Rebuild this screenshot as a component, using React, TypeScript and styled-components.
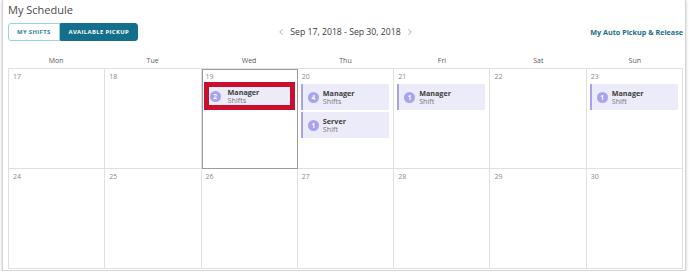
import React from 'react'
import styled, { createGlobalStyle } from 'styled-components'
import { ChevronLeft, ChevronRight } from 'lucide-react'

const GlobalStyle = createGlobalStyle`
  html, body {
    margin: 0;
    padding: 0;
    background: #ffffff;
  }
  body {
    font-family: 'Open Sans', 'Liberation Sans', sans-serif;
    color: #333;
  }
`

const Frame = styled.div`
  margin-left: 2px;
  width: 684px;
  height: 271px;
  box-sizing: border-box;
  border: 1px solid #d4d4d4;
  border-top: none;
  box-shadow: 0 1px 3px rgba(0, 0, 0, 0.22);
  padding: 0 2px 1px 5px;
  display: flex;
  flex-direction: column;
`

const Title = styled.h1`
  margin: 0;
  font-size: 11px;
  line-height: 20px;
  font-weight: 400;
  color: #4a4a4a;
`

const Toolbar = styled.div`
  margin-top: 2px;
  height: 19px;
  display: grid;
  grid-template-columns: 1fr auto 1fr;
  align-items: center;
`

const Toggle = styled.div`
  display: flex;
  height: 18px;
`

const ToggleButton = styled.div<{ $active?: boolean }>`
  box-sizing: border-box;
  height: 18px;
  padding: 0 8px;
  display: flex;
  align-items: center;
  font-size: 5.9px;
  font-weight: 700;
  letter-spacing: 0.35px;
  text-transform: uppercase;
  border: 1px solid ${p => (p.$active ? '#136f8c' : '#93d4e6')};
  background: ${p => (p.$active ? '#136f8c' : '#ffffff')};
  color: ${p => (p.$active ? '#ffffff' : '#2a87a3')};
  border-radius: ${p => (p.$active ? '0 3px 3px 0' : '3px 0 0 3px')};
`

const DateNav = styled.div`
  display: flex;
  align-items: center;
  gap: 4px;
  font-size: 8.7px;
  color: #3a3a3a;
  svg {
    color: #777;
  }
`

const AutoLink = styled.a`
  justify-self: end;
  font-size: 7.2px;
  font-weight: 700;
  color: #1b6c88;
  text-decoration: none;
`

const DayHeader = styled.div`
  margin-top: 9px;
  height: 18px;
  display: grid;
  grid-template-columns: repeat(7, 1fr);
  align-items: center;
`

const DayName = styled.div`
  text-align: center;
  font-size: 7px;
  color: #5a5a5a;
  padding-top: 2px;
`

const Grid = styled.div`
  flex: 1;
  display: grid;
  grid-template-columns: repeat(7, 1fr);
  grid-template-rows: 100px 100px;
  border-top: 1px solid #e0e0e0;
  border-left: 1px solid #e0e0e0;
`

const Cell = styled.div<{ $today?: boolean }>`
  box-sizing: border-box;
  border-right: 1px solid #e0e0e0;
  border-bottom: 1px solid #e0e0e0;
  padding: 2px 4px 0 3px;
  display: flex;
  flex-direction: column;
  gap: 2px;
  outline: ${p => (p.$today ? '1px solid #9c9c9c' : 'none')};
  outline-offset: -1px;
  min-width: 0;
`

const DayNum = styled.div`
  font-size: 7px;
  line-height: 11px;
  color: #8a8a8a;
  padding-left: 1px;
`

const ShiftCard = styled.div`
  height: 26px;
  box-sizing: border-box;
  background: #ecebfa;
  border-left: 2px solid #a7a1ee;
  display: flex;
  align-items: center;
  gap: 4px;
  padding-left: 5px;
`

const Highlight = styled.div`
  margin: -2px -2px 0 -1px;
  border: 5px solid #c8102e;
  height: 28px;
  box-sizing: border-box;
  display: flex;
  align-items: center;
  background: #ffffff;
`

const HighlightCard = styled.div`
  flex: 1;
  height: 18px;
  background: #ecebfa;
  display: flex;
  align-items: center;
  gap: 7px;
  padding-left: 1px;
`

const Badge = styled.div`
  width: 11px;
  height: 11px;
  border-radius: 50%;
  background: #a9a3ef;
  color: #ffffff;
  font-size: 6.5px;
  font-weight: 700;
  display: flex;
  align-items: center;
  justify-content: center;
  flex-shrink: 0;
`

const ShiftText = styled.div`
  display: flex;
  flex-direction: column;
  font-size: 7.2px;
  line-height: 8.5px;
`

const Role = styled.span`
  font-weight: 700;
  color: #3c3c3c;
`

const Count = styled.span`
  color: #7a7a7a;
`

type Shift = { role: string; count: number }

const days = ['Mon', 'Tue', 'Wed', 'Thu', 'Fri', 'Sat', 'Sun']

const shifts: Record<number, Shift[]> = {
  19: [{ role: 'Manager', count: 2 }],
  20: [
    { role: 'Manager', count: 4 },
    { role: 'Server', count: 1 },
  ],
  21: [{ role: 'Manager', count: 1 }],
  23: [{ role: 'Manager', count: 1 }],
}

const ShiftBody = ({ s }: { s: Shift }) => (
  <>
    <Badge>{s.count}</Badge>
    <ShiftText>
      <Role>{s.role}</Role>
      <Count>{s.count > 1 ? 'Shifts' : 'Shift'}</Count>
    </ShiftText>
  </>
)

const App: React.FC = () => {
  const dates = Array.from({ length: 14 }, (_, i) => 17 + i)
  return (
    <>
      <GlobalStyle />
      <Frame>
        <Title>My Schedule</Title>
        <Toolbar>
          <Toggle>
            <ToggleButton>My Shifts</ToggleButton>
            <ToggleButton $active>Available Pickup</ToggleButton>
          </Toggle>
          <DateNav>
            <ChevronLeft size={10} strokeWidth={1.5} />
            <span>Sep 17, 2018 - Sep 30, 2018</span>
            <ChevronRight size={10} strokeWidth={1.5} />
          </DateNav>
          <AutoLink href="#">My Auto Pickup &amp; Release</AutoLink>
        </Toolbar>
        <DayHeader>
          {days.map(d => (
            <DayName key={d}>{d}</DayName>
          ))}
        </DayHeader>
        <Grid>
          {dates.map(d => (
            <Cell key={d} $today={d === 19}>
              <DayNum>{d}</DayNum>
              {d === 19
                ? shifts[d].map((s, i) => (
                    <Highlight key={i}>
                      <HighlightCard>
                        <ShiftBody s={s} />
                      </HighlightCard>
                    </Highlight>
                  ))
                : (shifts[d] || []).map((s, i) => (
                    <ShiftCard key={i}>
                      <ShiftBody s={s} />
                    </ShiftCard>
                  ))}
            </Cell>
          ))}
        </Grid>
      </Frame>
    </>
  )
}

export default App
